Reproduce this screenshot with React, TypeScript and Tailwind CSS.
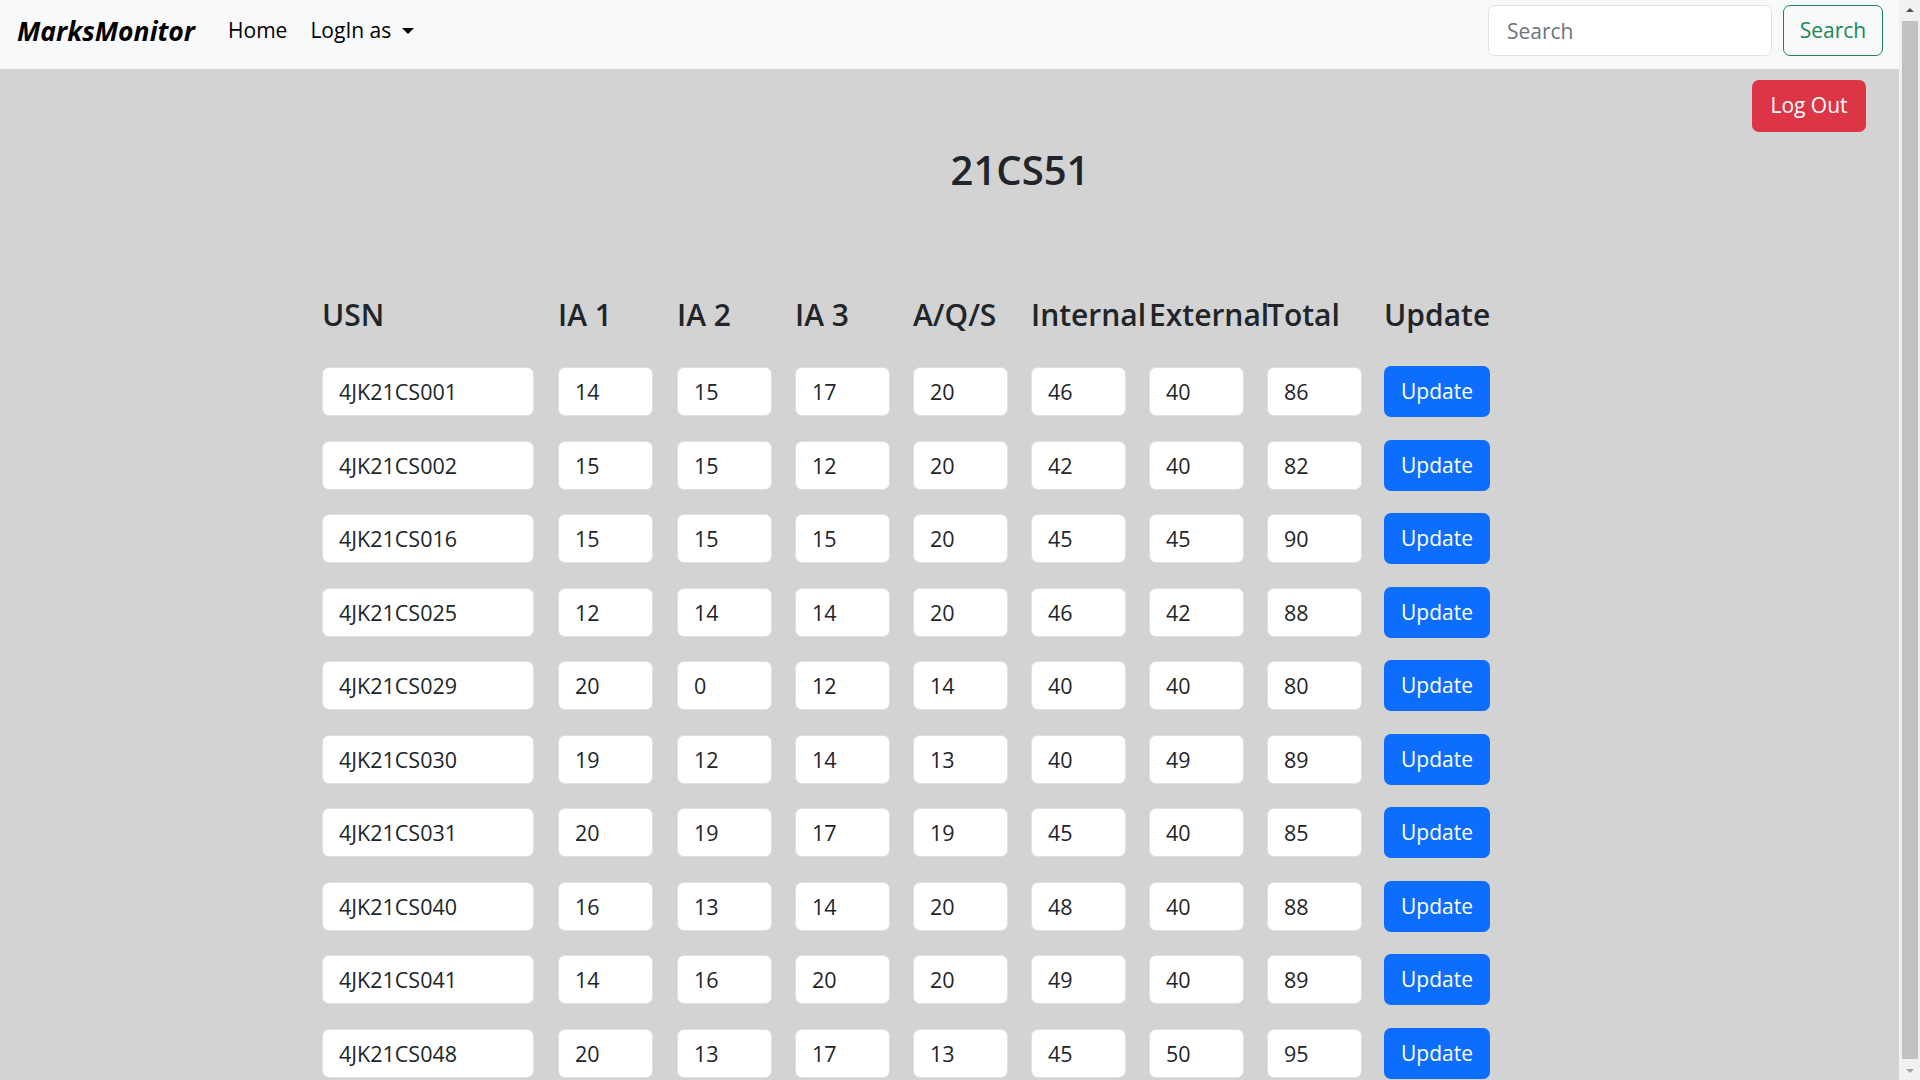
const rows = [
  ["4JK21CS001", "14", "15", "17", "20", "46", "40", "86"],
  ["4JK21CS002", "15", "15", "12", "20", "42", "40", "82"],
  ["4JK21CS016", "15", "15", "15", "20", "45", "45", "90"],
  ["4JK21CS025", "12", "14", "14", "20", "46", "42", "88"],
  ["4JK21CS029", "20", "0", "12", "14", "40", "40", "80"],
  ["4JK21CS030", "19", "12", "14", "13", "40", "49", "89"],
  ["4JK21CS031", "20", "19", "17", "19", "45", "40", "85"],
  ["4JK21CS040", "16", "13", "14", "20", "48", "40", "88"],
  ["4JK21CS041", "14", "16", "20", "20", "49", "40", "89"],
  ["4JK21CS048", "20", "13", "17", "13", "45", "50", "95"],
];

const headers = ["USN", "IA 1", "IA 2", "IA 3", "A/Q/S", "Internal", "External", "Total", "Update"];

const cols =
  "grid grid-cols-[236px_119px_118px_118px_118px_118px_118px_117px_106px]";

function Navbar() {
  return (
    <nav className="h-[69px] bg-[#f8f9fa] flex items-start pt-[5px] pl-[17px] pr-[16px]">
      <div className="h-[52px] flex items-center">
        <a className="text-[26.5px] font-bold italic text-black leading-none">
          MarksMonitor
        </a>
        <a className="ml-[33px] text-[21px] text-black">Home</a>
        <button className="ml-[23px] flex items-center text-[21px] text-black">
          LogIn as
          <span className="ml-[11px] w-0 h-0 border-x-[6px] border-x-transparent border-t-[6px] border-t-black"></span>
        </button>
      </div>
      <div className="ml-auto flex items-center gap-[11px]">
        <input
          placeholder="Search"
          className="w-[284px] h-[51px] bg-white border border-[#dee2e6] rounded-[7px] px-[18px] text-[21px] text-[#212529] placeholder:text-[#6c757d] outline-none"
        />
        <button className="w-[100px] h-[51px] border border-[#198754] rounded-[7px] text-[21px] text-[#198754]">
          Search
        </button>
      </div>
    </nav>
  );
}

function Scrollbar() {
  return (
    <aside className="w-[21px] shrink-0 h-screen sticky top-0 bg-[#f1f1f1] flex flex-col items-center">
      <div className="h-[19px] flex items-center justify-center">
        <span className="w-0 h-0 border-x-[4px] border-x-transparent border-b-[4px] border-b-[#505050]"></span>
      </div>
      <div className="w-[16px] flex-1 bg-[#c1c1c1] my-[2px]"></div>
      <div className="h-[19px] flex items-center justify-center">
        <span className="w-0 h-0 border-x-[4px] border-x-transparent border-t-[4px] border-t-[#a3a3a3]"></span>
      </div>
    </aside>
  );
}

export default function App() {
  return (
    <div className="flex bg-[#d3d3d3] font-['Open_Sans',sans-serif] text-[#212529]">
      <div className="flex-1 min-w-0 min-h-screen pb-[10px]">
        <Navbar />

        <div className="flex justify-end pr-[33px] pt-[11px]">
          <button className="w-[114px] h-[52px] bg-[#dc3545] text-white text-[21px] rounded-[7px]">
            Log Out
          </button>
        </div>

        <div className="flex justify-center pl-[141px] mt-[14px]">
          <h1 className="text-[40px] font-semibold leading-[1.2]">21CS51</h1>
        </div>

        <div className="ml-[322px] mt-[103px]">
          {/* header row */}
          <div className={cols}>
            {headers.map((h) => (
              <h3 key={h} className="text-[30px] font-semibold leading-[1.2] whitespace-nowrap">
                {h}
              </h3>
            ))}
          </div>

          {/* marks rows */}
          <div className="mt-[22px]">
            {rows.map((r) => (
              <div key={r[0]} className={cols + " h-[73.5px] items-center"}>
                {r.map((v, i) => (
                  <input
                    key={i}
                    defaultValue={v}
                    className={
                      (i === 0 ? "w-[212px]" : "w-[95px]") +
                      " h-[49px] bg-white border border-[#dee2e6] rounded-[7px] px-[16px] text-[21.5px] text-[#212529] outline-none"
                    }
                  />
                ))}
                <button className="w-[106px] h-[51px] bg-[#0d6efd] text-white text-[21px] rounded-[7px]">
                  Update
                </button>
              </div>
            ))}
          </div>
        </div>
      </div>
      <Scrollbar />
    </div>
  );
}
